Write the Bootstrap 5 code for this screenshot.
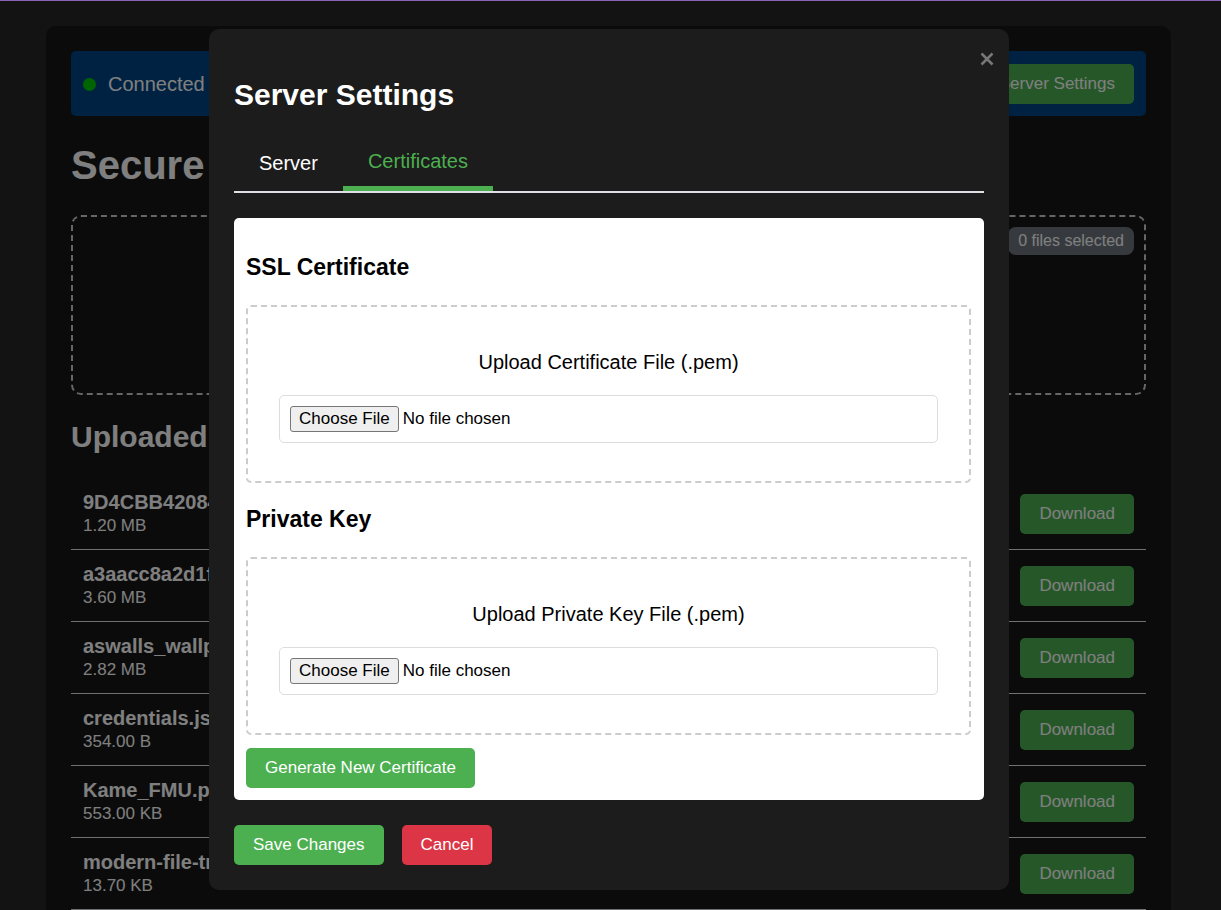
<!DOCTYPE html>
<html lang="en">
<head>
<meta charset="utf-8">
<meta name="viewport" content="width=device-width, initial-scale=1">
<title>Server Settings</title>
<link href="https://cdn.jsdelivr.net/npm/bootstrap@5.3.0/dist/css/bootstrap.min.css" rel="stylesheet">
<style>
  body { background: #262626; border-top: 1px solid #8a63b5; color: #fff; font: 20px/24px "Liberation Sans", Arial, sans-serif; overflow: hidden; min-height: 100vh; padding-right: 4px; }
  .app-panel { max-width: 1125px; margin-top: 25px; background: #161616; border-radius: 10px; padding: 25px; }
  .status-bar { background: #004484; border-radius: 5px; padding: 13px 12px 12px; }
  .status-dot { width: 13px; height: 13px; border-radius: 50%; background: #00c800; margin-right: 12px; }
  .btn { --bs-btn-font-size: 17px; --bs-btn-line-height: 20px; --bs-btn-padding-x: 19px; --bs-btn-padding-y: 10px; --bs-btn-border-radius: 5px; --bs-btn-color: #fff; border: 0; }
  .btn-green { --bs-btn-bg: #4caf50; --bs-btn-hover-bg: #449d48; --bs-btn-hover-color: #fff; }
  .btn-danger { --bs-btn-bg: #dc3545; }
  h1 { font-size: 40px; line-height: 46px; font-weight: 700; margin: 26px 0 27px; }
  h2 { font-size: 30px; line-height: 34px; font-weight: 700; margin: 25px 0 24px; }
  .drop-area { height: 180px; border: 2px dashed #ccc; border-radius: 10px; padding: 10px; }
  .count-pill { background: #6c757d; font-size: 16px; line-height: 18px; padding: 5px 10px; border-radius: 8px; }
  .file-row { border-bottom: 1px solid #dee2e6; padding: 12px; height: 72px; }
  .file-name { font-weight: 700; line-height: 24px; }
  .file-size { font-size: 17px; line-height: 24px; }
  .settings-overlay { top: 1px; background: rgba(0,0,0,.5); padding-right: 3px; }
  .settings-overlay .modal-dialog { max-width: 800px; margin: 28px auto; }
  .settings-overlay .modal-content { background: #1c1c1c; color: #fff; border: 0; border-radius: 10px; padding: 24px 25px 25px; }
  .close-x { top: 18px; right: 10px; width: 24px; height: 24px; }
  .settings-tabs { border-bottom: 2px solid #dee2e6; margin-bottom: 25px; }
  .settings-tabs .nav-link { color: #fff; border: 0; border-radius: 0; padding: 15px 25px 16px; background: none; }
  .settings-tabs .nav-link.active { color: #4caf50; border-bottom: 5px solid #4caf50; padding: 13px 25px; background: none; }
  .cert-pane { background: #fff; color: #000; border-radius: 5px; padding: 13px 13px 12px 12px; }
  .cert-pane h3 { font-size: 23px; line-height: 28px; font-weight: 700; margin: 22px 0 24px; }
  .upload-box { border: 2px dashed #ccc; border-radius: 5px; padding: 43px 31px 38px; }
  .upload-box label { margin-bottom: 21px; }
  .file-input { font-size: 17px; line-height: 26px; padding: 10px; border: 1px solid #ddd; border-radius: 5px; color: #000; background: #fff; }
  .file-input::file-selector-button { font-size: 17px; line-height: 22px; padding: 1px 8px; border: 1px solid #767676; border-radius: 3px; background: #efefef; color: #000; margin-right: 4px; }
  .generate-btn { margin-top: 13px; }
  .form-actions { margin-top: 25px; gap: 18px; }
</style>
</head>
<body class="modal-open">
<main class="app-panel mx-auto">
  <div class="status-bar d-flex align-items-center">
    <span class="status-dot"></span>
    <span class="flex-grow-1">Connected</span>
    <button type="button" class="btn btn-green">Server Settings</button>
  </div>
  <h1>Secure</h1>
  <section class="drop-area d-flex justify-content-end align-items-start"><span class="count-pill">0 files selected</span></section>
  <h2>Uploaded</h2>
  <div>
    <div class="file-row d-flex justify-content-between"><div><div class="file-name">9D4CBB42084</div><div class="file-size">1.20 MB</div></div><button type="button" class="btn btn-green align-self-center">Download</button></div>
    <div class="file-row d-flex justify-content-between"><div><div class="file-name">a3aacc8a2d1f</div><div class="file-size">3.60 MB</div></div><button type="button" class="btn btn-green align-self-center">Download</button></div>
    <div class="file-row d-flex justify-content-between"><div><div class="file-name">aswalls_wallp</div><div class="file-size">2.82 MB</div></div><button type="button" class="btn btn-green align-self-center">Download</button></div>
    <div class="file-row d-flex justify-content-between"><div><div class="file-name">credentials.json</div><div class="file-size">354.00 B</div></div><button type="button" class="btn btn-green align-self-center">Download</button></div>
    <div class="file-row d-flex justify-content-between"><div><div class="file-name">Kame_FMU.p</div><div class="file-size">553.00 KB</div></div><button type="button" class="btn btn-green align-self-center">Download</button></div>
    <div class="file-row d-flex justify-content-between"><div><div class="file-name">modern-file-tr</div><div class="file-size">13.70 KB</div></div><button type="button" class="btn btn-green align-self-center">Download</button></div>
  </div>
</main>

<div class="modal d-block settings-overlay" tabindex="-1" role="dialog" aria-labelledby="settingsTitle">
  <div class="modal-dialog">
    <div class="modal-content">
      <button type="button" class="close-x btn p-0 position-absolute d-flex align-items-center justify-content-center" aria-label="Close">
        <svg width="14" height="14" viewBox="0 0 14 14" fill="none" stroke="#777" stroke-width="2.5"><path d="M1.5 1.5l11 11M12.5 1.5l-11 11"/></svg>
      </button>
      <h2 id="settingsTitle">Server Settings</h2>
      <div class="settings-tabs nav align-items-end" role="tablist">
        <button type="button" class="nav-link" role="tab">Server</button>
        <button type="button" class="nav-link active" role="tab" aria-selected="true">Certificates</button>
      </div>
      <div class="cert-pane">
        <h3>SSL Certificate</h3>
        <div class="upload-box">
          <label for="certFile" class="d-block text-center">Upload Certificate File (.pem)</label>
          <input type="file" id="certFile" class="file-input d-block w-100">
        </div>
        <h3>Private Key</h3>
        <div class="upload-box">
          <label for="keyFile" class="d-block text-center">Upload Private Key File (.pem)</label>
          <input type="file" id="keyFile" class="file-input d-block w-100">
        </div>
        <button type="button" class="btn btn-green generate-btn">Generate New Certificate</button>
      </div>
      <div class="form-actions d-flex">
        <button type="button" class="btn btn-green">Save Changes</button>
        <button type="button" class="btn btn-danger">Cancel</button>
      </div>
    </div>
  </div>
</div>
<script src="https://cdn.jsdelivr.net/npm/bootstrap@5.3.0/dist/js/bootstrap.bundle.min.js"></script>
</body>
</html>
